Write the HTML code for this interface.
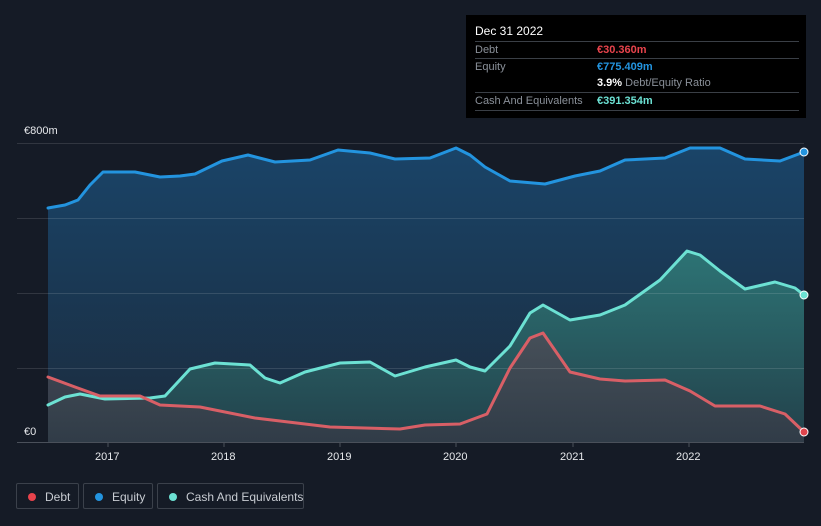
<!DOCTYPE html>
<html><head><meta charset="utf-8"><style>
body{margin:0;width:821px;height:526px;background:#151b26;font-family:"Liberation Sans",sans-serif;overflow:hidden;position:relative}
.tt{position:absolute;left:466px;top:15px;width:340px;height:103px;background:#000;color:#fff;font-size:11px}
.tt .h{position:absolute;left:9px;top:9px;font-size:12px}
.row{position:absolute;left:9px;width:324px;height:17px;border-top:1px solid #3a3f46;color:#8a9099;line-height:17px;white-space:nowrap}
.row span{position:absolute;left:122px;font-weight:bold}
.lg{position:absolute;top:483px;height:26px;border:1px solid #3b414b;border-radius:2px;color:#c8ccd2;font-size:12px;line-height:26px;box-sizing:border-box;white-space:nowrap}
.lg i{position:absolute;left:11px;top:9px;width:8px;height:8px;border-radius:50%}
.lg b{font-weight:normal;position:absolute;left:28px}
.ax{position:absolute;color:#e6e8eb;font-size:11px}
</style></head><body>
<svg width="821" height="526" style="position:absolute;left:0;top:0">
<defs>
<linearGradient id="ge" x1="0" y1="0" x2="0" y2="1"><stop offset="0" stop-color="#1a4468"/><stop offset="1" stop-color="#1b2b3d"/></linearGradient>
<linearGradient id="gc" x1="0" y1="0" x2="0" y2="1"><stop offset="0" stop-color="#2f7a78"/><stop offset="1" stop-color="#23434c"/></linearGradient>
<linearGradient id="gd" x1="0" y1="0" x2="0" y2="1"><stop offset="0" stop-color="#4c4d57"/><stop offset="1" stop-color="#333b47"/></linearGradient>
</defs>
<polygon fill="url(#ge)" points="48,208 65,205 78,200 90,185 103,172 135,172 160,177 180,176 195,174 222,161 248,155 275,162 310,160 338,150 370,153 395,159 430,158 456,148 470,155 485,167 510,181 545,184 575,176 600,171 625,160 665,158 690,148 720,148 745,159 780,161 804,152 804,442 48,442"/>
<polygon fill="url(#gc)" opacity="0.9" points="48,405 65,397 80,394 105,399 150,398 165,396 190,369 215,363 250,365 265,378 280,383 305,372 340,363 370,362 395,376 425,367 456,360 470,367 485,371 510,346 530,313 543,305 570,320 600,315 625,305 660,280 687,251 700,255 720,271 745,289 775,282 795,288 804,295 804,442 48,442"/>
<polygon fill="url(#gd)" opacity="0.85" points="48,377 75,387 100,396 140,396 160,405 200,407 255,418 330,427 400,429 425,425 460,424 487,414 510,368 530,338 543,333 570,372 600,379 625,381 665,380 690,391 715,406 760,406 785,414 804,432 804,442 48,442"/>
<g stroke="#ffffff" stroke-opacity="0.12" stroke-width="1">
<line x1="17" y1="143.5" x2="804" y2="143.5"/><line x1="17" y1="218.5" x2="804" y2="218.5"/><line x1="17" y1="293.5" x2="804" y2="293.5"/><line x1="17" y1="368.5" x2="804" y2="368.5"/></g>
<line x1="17" y1="442.5" x2="804" y2="442.5" stroke="#4a505a"/>
<g stroke="#4a505a"><line x1="108" y1="443" x2="108" y2="447"/><line x1="224" y1="443" x2="224" y2="447"/><line x1="340" y1="443" x2="340" y2="447"/><line x1="456" y1="443" x2="456" y2="447"/><line x1="573" y1="443" x2="573" y2="447"/><line x1="689" y1="443" x2="689" y2="447"/></g>
<g fill="none" stroke-width="3" stroke-linejoin="round" stroke-linecap="round">
<polyline stroke="#2394df" points="48,208 65,205 78,200 90,185 103,172 135,172 160,177 180,176 195,174 222,161 248,155 275,162 310,160 338,150 370,153 395,159 430,158 456,148 470,155 485,167 510,181 545,184 575,176 600,171 625,160 665,158 690,148 720,148 745,159 780,161 804,152"/>
<polyline stroke="#6ce1d3" points="48,405 65,397 80,394 105,399 150,398 165,396 190,369 215,363 250,365 265,378 280,383 305,372 340,363 370,362 395,376 425,367 456,360 470,367 485,371 510,346 530,313 543,305 570,320 600,315 625,305 660,280 687,251 700,255 720,271 745,289 775,282 795,288 804,295"/>
<polyline stroke="#d85f66" points="48,377 75,387 100,396 140,396 160,405 200,407 255,418 330,427 400,429 425,425 460,424 487,414 510,368 530,338 543,333 570,372 600,379 625,381 665,380 690,391 715,406 760,406 785,414 804,432"/>
</g>
<circle cx="804" cy="152" r="4" fill="#2394df" stroke="#fff" stroke-width="1"/>
<circle cx="804" cy="295" r="4" fill="#6ce1d3" stroke="#fff" stroke-width="1"/>
<circle cx="804" cy="432" r="4" fill="#e0454d" stroke="#fff" stroke-width="1"/>
<rect x="17" y="424" width="31" height="18" fill="#151b26"/>
</svg>
<div class="ax" style="left:24px;top:125px">€800m</div>
<div class="ax" style="left:24px;top:426px">€0</div>
<div class="ax" style="left:95px;top:451px">2017</div>
<div class="ax" style="left:211px;top:451px">2018</div>
<div class="ax" style="left:327px;top:451px">2019</div>
<div class="ax" style="left:443px;top:451px">2020</div>
<div class="ax" style="left:560px;top:451px">2021</div>
<div class="ax" style="left:676px;top:451px">2022</div>
<div class="tt">
<div class="h">Dec 31 2022</div>
<div class="row" style="top:26px">Debt<span style="color:#e8434c">€30.360m</span></div>
<div class="row" style="top:43px">Equity<span style="color:#2394df">€775.409m</span></div>
<div class="row" style="top:60px;border-top:none"><span style="color:#fff">3.9% <em style="font-style:normal;font-weight:normal;color:#8a9099">Debt/Equity Ratio</em></span></div>
<div class="row" style="top:77px">Cash And Equivalents<span style="color:#6ce1d3">€391.354m</span></div>
<div class="row" style="top:95px;height:0"></div>
</div>
<div class="lg" style="left:16px;width:63px"><i style="background:#e8434c"></i><b>Debt</b></div>
<div class="lg" style="left:83px;width:70px"><i style="background:#2394df"></i><b>Equity</b></div>
<div class="lg" style="left:157px;width:147px"><i style="background:#6ce1d3"></i><b>Cash And Equivalents</b></div>
</body></html>
